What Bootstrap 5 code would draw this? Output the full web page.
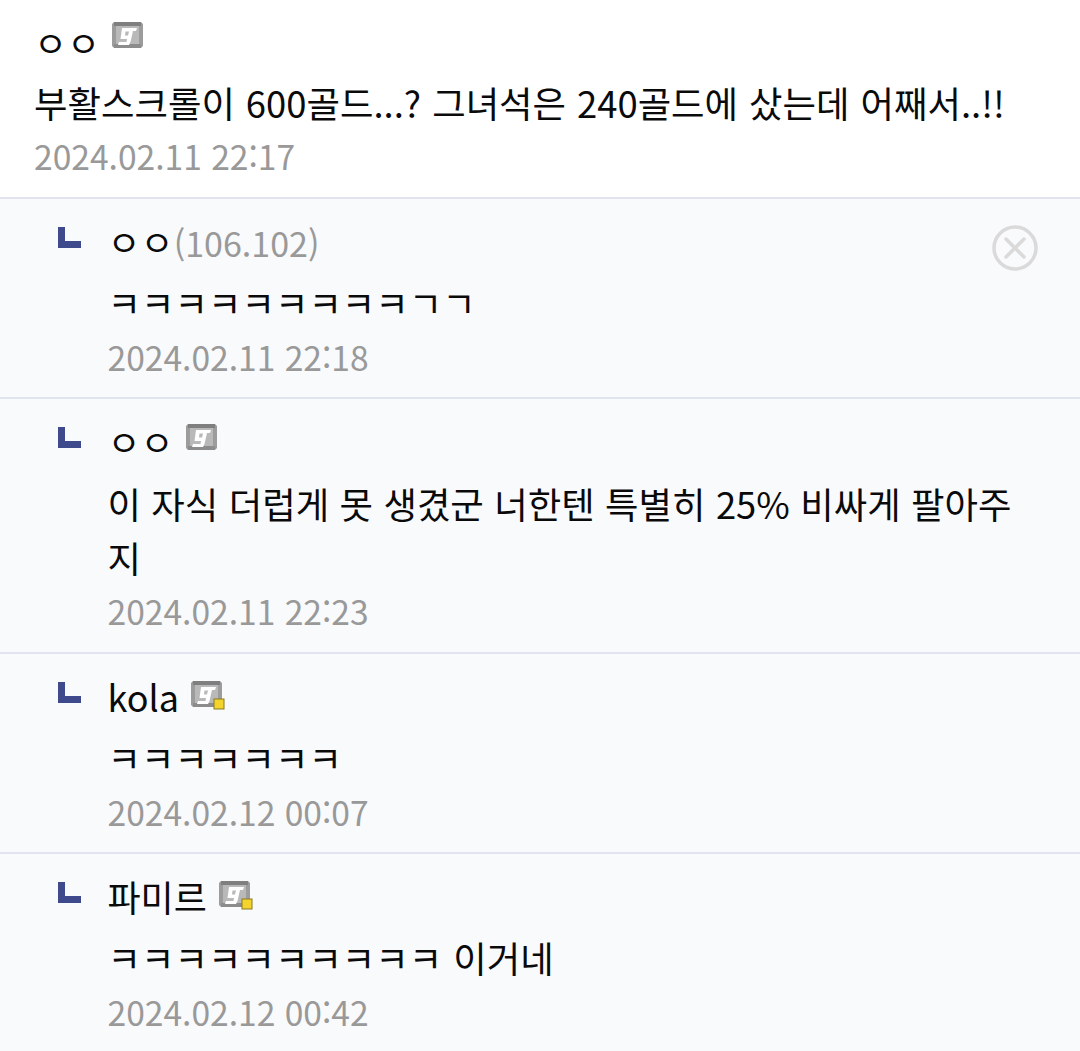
<!DOCTYPE html>
<html lang="ko">
<head>
<meta charset="utf-8">
<link href="https://cdn.jsdelivr.net/npm/bootstrap@5.3.0/dist/css/bootstrap.min.css" rel="stylesheet">
<style>
html,body{margin:0;background:#fff;overflow:hidden}
body{font-family:"Noto Sans CJK KR","Noto Sans",sans-serif;font-size:36px;color:#0a0a0a;width:1080px;height:1051px}
.cmt-item{border-bottom:2px solid #e1e3ee;position:relative}
.cmt-top{padding:12px 34px 0;height:199px}
.cmt-reply{background:#f9fafc;padding:12px 56px 0 107.5px;height:200px}
.cmt-reply.tall{height:255px}
.cmt-reply.tall .cmt-text{word-spacing:.2px;margin-top:5px}
.cmt-reply.tall .cmt-date{margin-top:4px}
.cmt-reply.last{border-bottom:0}
.cmt-name{height:60px;line-height:60px;white-space:nowrap}
.cmt-ip{color:#999;font-size:34px}
.cmt-text{line-height:54px;margin-top:4px;font-size:36.4px;word-spacing:.8px}
.cmt-top .cmt-text{line-height:62px;height:62px;white-space:nowrap;margin-top:-1px}
.cmt-date{color:#999;line-height:46px;font-size:33.6px;margin-top:5px}
.cmt-top .cmt-date{margin-top:0}
.cmt-arrow{position:absolute;left:58px;top:28px;width:23px;height:21px}
.cmt-x{position:absolute;left:992px;top:26px;width:46px;height:46px}
.cmt-badge{width:33px;height:30px;margin-left:11px;align-self:flex-start;margin-top:12px}
.cmt-top .cmt-badge{margin-left:11px;margin-top:9px}
.cmt-badge.lv{width:36px;margin-top:14px}
</style>
</head>
<body>
<svg width="0" height="0" class="d-block" aria-hidden="true"><defs>
<g id="gon">
<path d="M3 1h27l2 2v22l-2 2H3l-2-2V3z" fill="#9c9c9c"/>
<rect x="5" y="5" width="23" height="18" fill="#b9b9b9"/>
<rect x="3" y="1" width="27" height="4" fill="#7f7f7f"/>
<rect x="3" y="23" width="27" height="4" fill="#8c8c8c"/>
<path fill-rule="evenodd" d="M11 7H26L25 10H22L19.5 21 18 24H7L8 21H15.5L16 18H9.5L11 7ZM14.5 10.5L14 14.5H17L18 10.5Z" fill="#fff"/>
</g>
</defs></svg>

<section class="cmt-item cmt-top">
  <div class="cmt-name d-flex align-items-center"><span>ㅇㅇ</span><svg class="cmt-badge" viewBox="0 0 33 30"><use href="#gon"/></svg></div>
  <div class="cmt-text">부활스크롤이 600골드...? 그녀석은 240골드에 샀는데 어째서..!!</div>
  <div class="cmt-date">2024.02.11 22:17</div>
</section>

<section class="cmt-item cmt-reply">
  <svg class="cmt-arrow" viewBox="0 0 23 21"><path d="M0 0h7v14h16v7H0z" fill="#3f4a8c"/></svg>
  <div class="cmt-name"><span>ㅇㅇ</span><span class="cmt-ip">(106.102)</span></div>
  <div class="cmt-text">ㅋㅋㅋㅋㅋㅋㅋㅋㅋㄱㄱ</div>
  <div class="cmt-date">2024.02.11 22:18</div>
  <svg class="cmt-x" viewBox="0 0 46 46"><circle cx="23" cy="23" r="21" fill="none" stroke="#dadada" stroke-width="3.5"/><path d="M14 14l18 18M32 14L14 32" stroke="#dadada" stroke-width="3.5" stroke-linecap="round"/></svg>
</section>

<section class="cmt-item cmt-reply tall">
  <svg class="cmt-arrow" viewBox="0 0 23 21"><path d="M0 0h7v14h16v7H0z" fill="#3f4a8c"/></svg>
  <div class="cmt-name d-flex align-items-center"><span>ㅇㅇ</span><svg class="cmt-badge" viewBox="0 0 33 30"><use href="#gon"/></svg></div>
  <div class="cmt-text">이 자식 더럽게 못 생겼군 너한텐 특별히 25% 비싸게 팔아주지</div>
  <div class="cmt-date">2024.02.11 22:23</div>
</section>

<section class="cmt-item cmt-reply">
  <svg class="cmt-arrow" viewBox="0 0 23 21"><path d="M0 0h7v14h16v7H0z" fill="#3f4a8c"/></svg>
  <div class="cmt-name d-flex align-items-center"><span>kola</span><svg class="cmt-badge lv" viewBox="0 0 36 30"><use href="#gon"/><rect x="24" y="19" width="10" height="10" fill="#f3d32c" stroke="#8a7a20"/></svg></div>
  <div class="cmt-text">ㅋㅋㅋㅋㅋㅋㅋ</div>
  <div class="cmt-date">2024.02.12 00:07</div>
</section>

<section class="cmt-item cmt-reply last">
  <svg class="cmt-arrow" viewBox="0 0 23 21"><path d="M0 0h7v14h16v7H0z" fill="#3f4a8c"/></svg>
  <div class="cmt-name d-flex align-items-center"><span>파미르</span><svg class="cmt-badge lv" viewBox="0 0 36 30"><use href="#gon"/><rect x="24" y="19" width="10" height="10" fill="#f3d32c" stroke="#8a7a20"/></svg></div>
  <div class="cmt-text">ㅋㅋㅋㅋㅋㅋㅋㅋㅋㅋ 이거네</div>
  <div class="cmt-date">2024.02.12 00:42</div>
</section>
<script src="https://cdn.jsdelivr.net/npm/bootstrap@5.3.0/dist/js/bootstrap.bundle.min.js"></script>
</body>
</html>
